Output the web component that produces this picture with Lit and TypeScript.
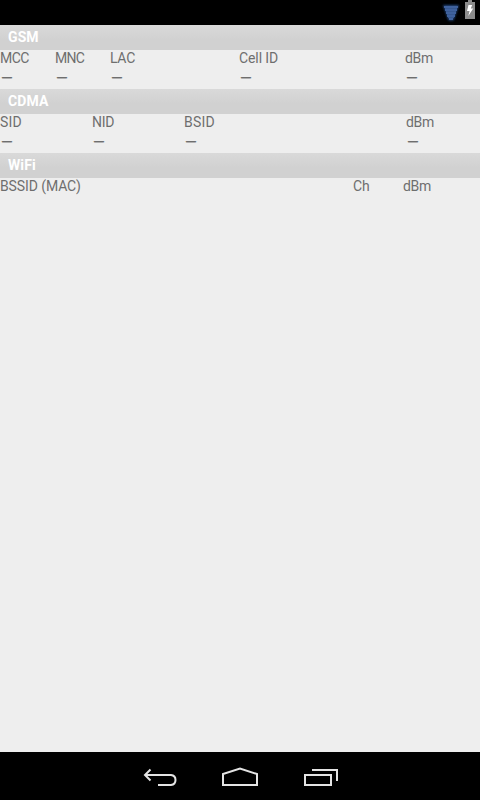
import { LitElement, html, css } from "lit";
import { customElement } from "lit/decorators.js";

interface Column { label: string; width: number; spacing?: number; }
interface Section { title: string; columns: Column[]; values: boolean; }

const sections: Section[] = [
  { title: "GSM", values: true, columns: [
    { label: "MCC", width: 55, spacing: -0.5 }, { label: "MNC", width: 55, spacing: -0.7 },
    { label: "LAC", width: 129, spacing: -0.3 },
    { label: "Cell ID", width: 166, spacing: -0.1 }, { label: "dBm", width: 75, spacing: -0.3 } ] },
  { title: "CDMA", values: true, columns: [
    { label: "SID", width: 92, spacing: 0.2 }, { label: "NID", width: 92, spacing: -0.3 },
    { label: "BSID", width: 222, spacing: 0.2 },
    { label: "dBm", width: 74, spacing: -0.3 } ] },
  { title: "WiFi", values: false, columns: [
    { label: "BSSID (MAC)", width: 353, spacing: -0.1 }, { label: "Ch", width: 50 },
    { label: "dBm", width: 77, spacing: -0.3 } ] },
];

@customElement("app-root")
export class AppRoot extends LitElement {
  static styles = css`
    :host { display: flex; flex-direction: column; width: 480px; height: 800px; background: #eee;
      font-family: Roboto, sans-serif; font-size: 14px; color: #6e6e6e; overflow: hidden; }
    .status { height: 25px; flex: none; background: #000; display: flex; justify-content: flex-end; }
    .content { flex: 1; }
    .heading { height: 25px; box-sizing: border-box; padding-left: 8px; line-height: 25px;
      font-weight: 700; color: #fff; background: linear-gradient(#d9d9d9, #d1d1d1 60%); letter-spacing: 0.1px; }
    .columns { display: flex; }
    .column { flex: none; white-space: nowrap; }
    .label { height: 18px; line-height: 17px; }
    .value { height: 21px; line-height: 20px; font-size: 15px; padding-left: 1px; -webkit-text-stroke: 0.3px #6e6e6e; }
    .nav { height: 48px; flex: none; background: #000; }
    svg { display: block; }
  `;

  render() {
    return html`
      <div class="status">
        <svg width="50" height="25" viewBox="0 0 50 25">
          <defs><filter id="glow" x="-30%" y="-30%" width="160%" height="160%"><feGaussianBlur stdDeviation="1"/></filter></defs>
          <path d="M13 5H29L23.5 20.5H18.5Z" fill="#24477f" filter="url(#glow)"/>
          <path d="M14 6H28V8H27V11H26V14H25V17H24V18H23V20H19V18H18V17H17V14H16V11H15V8H14Z" fill="#3f619c"/>
          <path d="M15 8.5H27M16 11.5H26M17 14.5H25M18 17.5H24" stroke="#36578f"/>
          <path d="M38 0H42V2H45V19H35V2H38Z" fill="#8c8c8c"/>
          <path d="M38.5 5H42.2L40.8 8.6H43.2L38.3 16L39.6 11H37Z" fill="#fff"/>
        </svg>
      </div>
      <div class="content">
        ${sections.map((s) => html`
          <div class="heading">${s.title}</div>
          <div class="columns">
            ${s.columns.map((c) => html`
              <div class="column" style="width:${c.width}px">
                <div class="label" style="letter-spacing:${c.spacing ?? 0}px">${c.label}</div>
                ${s.values ? html`<div class="value">—</div>` : ""}
              </div>`)}
          </div>`)}
      </div>
      <div class="nav">
        <svg width="480" height="48" viewBox="0 0 480 48" fill="none" stroke="#e4e4e4" stroke-width="2">
          <path d="M145 23H171Q175.5 23.5 175.5 28T171 33H158M150.5 17.5L145 23L150.5 28.5"/>
          <path d="M223 33V22L240 16.5L257 22V33Z"/>
          <path d="M305 23H331V33H305ZM312 18H337V29"/>
        </svg>
      </div>`;
  }
}
